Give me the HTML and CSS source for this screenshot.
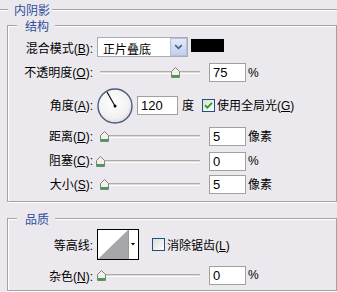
FILE: index.html
```html
<!DOCTYPE html>
<html>
<head>
<meta charset="utf-8">
<link rel="stylesheet" href="styles.css">
</head>
<body>
<div class="panel">
  <div class="panel-head"><span class="panel-title">内阴影</span></div>

  <div class="panel-body">
    <section class="group group-structure">
      <div class="group-head"><span class="group-title">结构</span></div>
      <div class="group-body body-structure">

        <div class="row r1">
          <span class="lbl">混合模式(<u>B</u>):</span>
          <div class="combo">
            <span class="combo-field">正片叠底</span>
            <span class="combo-btn"><svg width="9" height="6" viewBox="0 0 9 6"><path d="M1.2 1.2 L4.5 4.4 L7.8 1.2" fill="none" stroke="#4D6185" stroke-width="1.7"/></svg></span>
          </div>
          <span class="swatch"></span>
        </div>

        <div class="row r2">
          <span class="lbl">不透明度(<u>O</u>):</span>
          <div class="slider"><div class="track"></div><span class="thumb" style="left:74px"><svg width="9" height="11" viewBox="0 0 9 11"><path d="M4.5 0.5 L8.5 4.5 V10.5 H0.5 V4.5 Z" fill="#F1F1EC" stroke="#808080"/><rect x="1" y="8" width="7" height="2" fill="#3DA24C"/></svg></span></div>
          <input class="num" type="text" value="75" readonly>
          <span class="unit">%</span>
        </div>

        <div class="row r3">
          <span class="lbl">角度(<u>A</u>):</span>
          <svg class="dial" width="36" height="36" viewBox="0 0 36 36">
            <defs>
              <radialGradient id="dialg" cx="45%" cy="40%" r="65%">
                <stop offset="0" stop-color="#FFFFFF"/>
                <stop offset="0.7" stop-color="#F1F1F3"/>
                <stop offset="1" stop-color="#D6D6DE"/>
              </radialGradient>
            </defs>
            <circle cx="18" cy="18" r="17" fill="url(#dialg)" stroke="#4E5C7A" stroke-width="1.4"/>
            <line x1="18" y1="18" x2="10" y2="4" stroke="#000" stroke-width="1.1"/>
            <circle cx="18" cy="18" r="1.5" fill="#000"/>
          </svg>
          <input class="num num-angle" type="text" value="120" readonly>
          <span class="unit unit-deg">度</span>
          <span class="check check-global">
            <svg width="13" height="13" viewBox="0 0 13 13">
              <defs>
                <linearGradient id="cbg" x1="0" y1="0" x2="1" y2="1">
                  <stop offset="0" stop-color="#DCDCD7"/>
                  <stop offset="1" stop-color="#FFFFFF"/>
                </linearGradient>
              </defs>
              <rect x="0.5" y="0.5" width="12" height="12" fill="url(#cbg)" stroke="#1C5180"/>
              <path d="M3 6.2 L5.3 8.6 L10 3.9" fill="none" stroke="#21A121" stroke-width="1.8"/>
            </svg>
            <span class="check-text">使用全局光(<u>G</u>)</span>
          </span>
        </div>

        <div class="row r4">
          <span class="lbl">距离(<u>D</u>):</span>
          <div class="slider"><div class="track"></div><span class="thumb" style="left:3px"><svg width="9" height="11" viewBox="0 0 9 11"><path d="M4.5 0.5 L8.5 4.5 V10.5 H0.5 V4.5 Z" fill="#F1F1EC" stroke="#808080"/><rect x="1" y="8" width="7" height="2" fill="#3DA24C"/></svg></span></div>
          <input class="num" type="text" value="5" readonly>
          <span class="unit">像素</span>
        </div>

        <div class="row r5">
          <span class="lbl">阻塞(<u>C</u>):</span>
          <div class="slider"><div class="track"></div><span class="thumb" style="left:-1px"><svg width="9" height="11" viewBox="0 0 9 11"><path d="M4.5 0.5 L8.5 4.5 V10.5 H0.5 V4.5 Z" fill="#F1F1EC" stroke="#808080"/><rect x="1" y="8" width="7" height="2" fill="#3DA24C"/></svg></span></div>
          <input class="num" type="text" value="0" readonly>
          <span class="unit">%</span>
        </div>

        <div class="row r6">
          <span class="lbl">大小(<u>S</u>):</span>
          <div class="slider"><div class="track"></div><span class="thumb" style="left:3px"><svg width="9" height="11" viewBox="0 0 9 11"><path d="M4.5 0.5 L8.5 4.5 V10.5 H0.5 V4.5 Z" fill="#F1F1EC" stroke="#808080"/><rect x="1" y="8" width="7" height="2" fill="#3DA24C"/></svg></span></div>
          <input class="num" type="text" value="5" readonly>
          <span class="unit">像素</span>
        </div>
      </div>
    </section>

    <section class="group group-quality">
      <div class="group-head"><span class="group-title">品质</span></div>
      <div class="group-body body-quality">

        <div class="row q1">
          <span class="lbl">等高线:</span>
          <svg class="contour" width="42" height="31" viewBox="0 0 42 31">
            <rect x="0.5" y="0.5" width="41" height="30" fill="#FFFFFF" stroke="#000"/>
            <path d="M1 30 L31 1 L31 30 Z" fill="#A7A7A9"/>
            <line x1="31.5" y1="1" x2="31.5" y2="30" stroke="#9A9A9A"/>
            <path d="M34 14 L38 14 L36 16.5 Z" fill="#000"/>
          </svg>
          <span class="check check-aa">
            <svg width="13" height="13" viewBox="0 0 13 13">
              <rect x="0.5" y="0.5" width="12" height="12" fill="url(#cbg)" stroke="#1C5180"/>
            </svg>
            <span class="check-text">消除锯齿(<u>L</u>)</span>
          </span>
        </div>

        <div class="row q2">
          <span class="lbl">杂色(<u>N</u>):</span>
          <div class="slider"><div class="track"></div><span class="thumb" style="left:0px"><svg width="9" height="11" viewBox="0 0 9 11"><path d="M4.5 0.5 L8.5 4.5 V10.5 H0.5 V4.5 Z" fill="#F1F1EC" stroke="#808080"/><rect x="1" y="8" width="7" height="2" fill="#3DA24C"/></svg></span></div>
          <input class="num" type="text" value="0" readonly>
          <span class="unit">%</span>
        </div>
      </div>
    </section>
  </div>
</div>
</body>
</html>
```

FILE: styles.css
```css
* {
  box-sizing: border-box;
}

html,
body {
  margin: 0;
  padding: 0;
}

body {
  width: 337px;
  height: 292px;
  overflow: hidden;
  background: #ECE9EE;
  color: #000;
  font-family: "Liberation Sans", "Noto Sans CJK SC", sans-serif;
  font-size: 12px;
  line-height: 14px;
}

/* outer "内阴影" header: line - title - line */
.panel-head {
  display: flex;
  align-items: flex-start;
  height: 19px;
}

.panel-head::before,
.panel-head::after {
  content: "";
  height: 1px;
  margin-top: 9px;
  background: #A3A3A3;
  box-shadow: 0 1px 0 #FFFFFF;
}

.panel-head::before {
  width: 8px;
}

.panel-head::after {
  flex: 1;
}

.panel-title {
  padding: 0 2px 0 6px;
  line-height: 19px;
  color: #2D4E9C;
  font-family: "Noto Sans CJK SC", sans-serif;
}

.panel-body {
  padding-left: 7px;
}

/* group boxes */
.group-head {
  display: flex;
  align-items: flex-start;
  height: 13px;
}

.group-head::before,
.group-head::after {
  content: "";
  height: 7px;
  margin-top: 6px;
  border-top: 1px solid #A3A3A3;
  box-shadow: inset 0 1px 0 #FFFFFF;
}

.group-head::before {
  width: 9px;
  border-left: 1px solid #A3A3A3;
  box-shadow: inset 1px 1px 0 #FFFFFF;
}

.group-head::after {
  flex: 1;
  border-right: 1px solid #A3A3A3;
}

.group-title {
  padding: 0 6px 0 8px;
  line-height: 13px;
  color: #2D4E9C;
  font-family: "Noto Sans CJK SC", sans-serif;
}

.group-body {
  border: 1px solid #A3A3A3;
  border-top: 0;
  box-shadow: inset 1px 0 0 #FFFFFF, 0 1px 0 #FFFFFF;
}

.body-structure {
  padding: 3px 0 6px 0;
}

.group-quality {
  margin-top: 10px;
}

.body-quality {
  padding: 4px 0 0 0;
}

.row {
  display: flex;
  align-items: center;
}

.r1 { height: 24px; }
.r2 { height: 27px; }
.r3 { height: 39px; }
.r4 { height: 23px; }
.r5 { height: 26px; }
.r6 { height: 21px; }
.q1 { height: 31px; }
.q2 { height: 30px; }

.lbl {
  width: 85px;
  margin-right: 4px;
  text-align: right;
  white-space: nowrap;
}

.r1 .lbl {
  padding-top: 4px;
}

.q1 .lbl,
.q2 .lbl,
.q1 .check-text {
  padding-top: 3px;
}

u {
  text-decoration: underline;
  text-underline-offset: 1px;
}

/* combo box */
.combo {
  display: flex;
  width: 91px;
  height: 20px;
  border: 1px solid #A9ACB2;
  background: #fff;
}

.combo-field {
  flex: 1;
  padding: 4px 0 0 5px;
  line-height: 14px;
  font-family: "Noto Sans CJK SC", sans-serif;
}

.combo-btn {
  width: 17px;
  display: flex;
  align-items: center;
  justify-content: center;
  border: 1px solid #B3C1DD;
  background: linear-gradient(#E3EAF8, #C2D0EC);
}

.swatch {
  width: 33px;
  height: 13px;
  margin-left: 3px;
  margin-bottom: 3px;
  background: #000;
}

/* slider */
.slider {
  position: relative;
  width: 106px;
  height: 11px;
}

.track {
  margin: 4px 0 0 3px;
  width: 100px;
  height: 3px;
  border-radius: 1px;
  background: linear-gradient(#ABABAB 0 34%, #DDDCD4 34% 67%, #FFFFFF 67%);
}

.thumb {
  position: absolute;
  top: 0;
  width: 9px;
  height: 11px;
}

.thumb svg {
  display: block;
}

/* numeric input */
.num {
  width: 37px;
  height: 19px;
  margin: 0 0 0 6px;
  padding: 0 0 0 3px;
  border: 1px solid #A0A0A0;
  background: #fff;
  color: #000;
  font-family: "Liberation Sans", sans-serif;
  font-size: 13px;
  line-height: 17px;
  outline: none;
}

.num-angle {
  width: 41px;
  margin-left: 4px;
}

.unit {
  margin-left: 2px;
  white-space: nowrap;
}

.unit-deg {
  margin-left: 4px;
}

.dial {
  display: block;
}

/* checkbox */
.check {
  display: flex;
  align-items: center;
  white-space: nowrap;
}

.check svg {
  display: block;
}

.check-text {
  margin-left: 2px;
}

.check-global {
  margin-left: 8px;
}

.check-aa {
  margin-left: 13px;
}

.contour {
  display: block;
}
```
